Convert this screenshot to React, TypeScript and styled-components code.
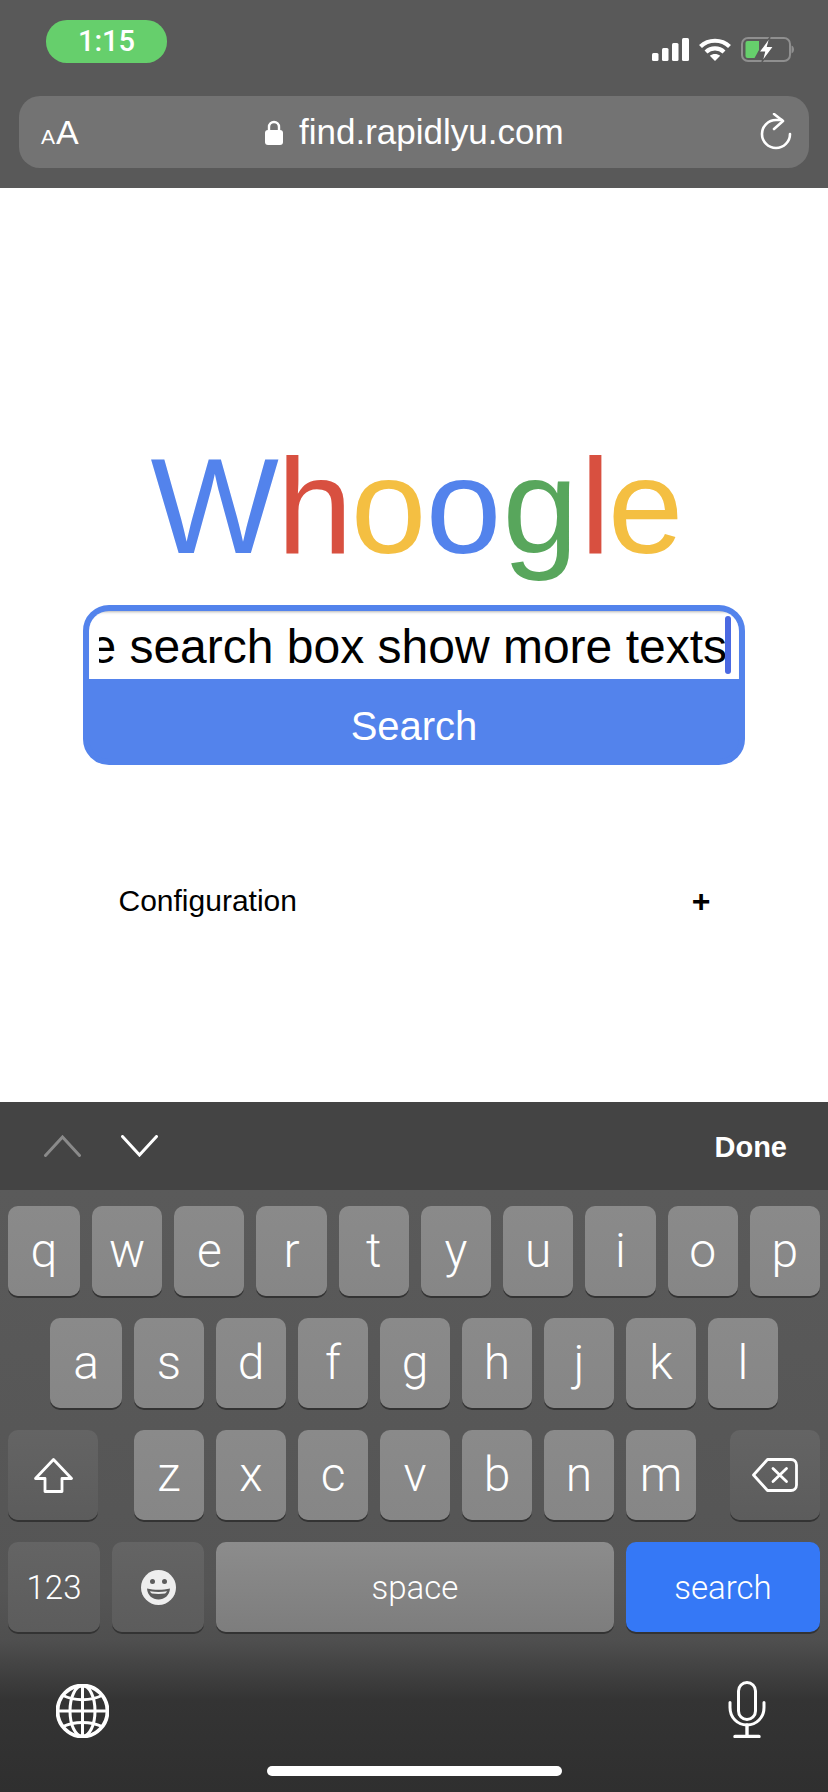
import React from "react"
import styled, { createGlobalStyle } from "styled-components"

const GlobalStyle = createGlobalStyle`
  html, body {
    margin: 0;
    padding: 0;
    background: #fff;
    font-family: "Liberation Sans", Arial, sans-serif;
  }
`

const Page = styled.div`
  width: 828px;
  height: 1792px;
  display: flex;
  flex-direction: column;
  overflow: hidden;
`

const Header = styled.header`
  height: 188px;
  background: #595959;
  padding: 20px 19px 0 19px;
  box-sizing: border-box;
`

const StatusBar = styled.div`
  height: 76px;
  display: flex;
  justify-content: space-between;
  align-items: flex-start;
  padding-left: 27px;
`

const TimePill = styled.div`
  width: 121px;
  height: 43px;
  border-radius: 21px;
  background: #66cf6c;
  color: #fff;
  font-family: Roboto, "Liberation Sans", sans-serif;
  font-size: 29px;
  font-weight: 500;
  line-height: 43px;
  text-align: center;
`

const StatusIcons = styled.div`
  display: flex;
  align-items: center;
  gap: 10px;
  margin-top: 17px;
  margin-right: 15px;
`

const UrlBar = styled.div`
  height: 72px;
  width: 790px;
  box-sizing: border-box;
  border-radius: 21px;
  background: #737373;
  position: relative;
  display: flex;
  align-items: center;
  justify-content: space-between;
  padding: 0 17px 0 22px;
  color: #fff;
`

const TextSize = styled.div`
  display: flex;
  align-items: baseline;
  gap: 1px;
  line-height: 1;
`

const SmallA = styled.span`
  font-size: 21px;
`

const BigA = styled.span`
  font-size: 34px;
`

const Address = styled.div`
  display: flex;
  align-items: center;
  gap: 16px;
  font-size: 35px;
  margin-right: 10px;
`

const Main = styled.main`
  flex: 1;
  background: #fff;
  padding-top: 250px;
  display: flex;
  flex-direction: column;
  align-items: center;
`

const Logo = styled.div`
  font-size: 136px;
  line-height: 136px;
  letter-spacing: -1.8px;
  height: 136px;
  margin-left: 4px;
`

const LogoLetter = styled.span<{ $color: string; $after?: number }>`
  color: ${p => p.$color};
  margin-right: ${p => p.$after ?? 0}px;
`

const SearchForm = styled.form`
  width: 662px;
  box-sizing: border-box;
  margin: 31px 0 0 0;
  border: 6px solid #5383ec;
  border-radius: 26px;
  background: #5383ec;
  overflow: hidden;
`

const Field = styled.div`
  position: relative;
  height: 68px;
  background: #fff;
  border-radius: 14px 14px 0 0;
  box-shadow: inset 0 3px 3px -2px rgba(0, 0, 0, 0.3);
  padding: 0 12px 0 10px;
`

const FieldText = styled.div`
  height: 100%;
  display: flex;
  justify-content: flex-end;
  overflow: hidden;
  white-space: nowrap;
  font-size: 48px;
  line-height: 71px;
  color: #000;
`

const Caret = styled.div`
  position: absolute;
  top: 5px;
  right: 8px;
  width: 6px;
  height: 58px;
  border-radius: 3px;
  background: #4a69e2;
`

const SearchButton = styled.div`
  height: 66px;
  padding-top: 14px;
  font-size: 40px;
  line-height: 66px;
  text-align: center;
  color: #fff;
`

const ConfigRow = styled.div`
  width: 592px;
  margin-top: 121px;
  margin-left: 1px;
  display: flex;
  justify-content: space-between;
  font-size: 30px;
  line-height: 30px;
  color: #000;
`

const Plus = styled.span`
  font-size: 32px;
  font-weight: 700;
`

const Toolbar = styled.div`
  height: 88px;
  background: #444;
  display: flex;
  align-items: center;
  padding: 0 41px 0 44px;
  color: #fff;
  box-sizing: border-box;
`

const Arrows = styled.div`
  display: flex;
  gap: 40px;
  flex: 1;
`

const Done = styled.div`
  font-size: 29px;
  font-weight: 700;
  margin-top: 3px;
`

const Keyboard = styled.div`
  height: 602px;
  box-sizing: border-box;
  padding: 16px 8px 0;
  display: flex;
  flex-direction: column;
  gap: 22px;
  background: linear-gradient(#5a5a5a 0, #555 400px, #4f4f4f 450px, #343434 510px, #2f2f2f 100%);
`

const KeyRow = styled.div<{ $inset?: number }>`
  display: flex;
  gap: 12px;
  padding: 0 ${p => p.$inset ?? 0}px;
  height: 90px;
`

const SpreadRow = styled(KeyRow)`
  justify-content: space-between;
`

const LetterGroup = styled.div`
  display: flex;
  gap: 12px;
  margin-left: 2px;
`

const Key = styled.div<{ $width?: number; $kind?: "letter" | "special" | "primary" }>`
  ${p => (p.$width ? `width: ${p.$width}px; flex: none;` : "flex: 1 1 0;")}
  height: 90px;
  box-sizing: border-box;
  border-radius: 10px;
  display: flex;
  align-items: center;
  justify-content: center;
  color: #fff;
  box-shadow: 0 2px 0 #333;
  background: ${p =>
    p.$kind === "special"
      ? "linear-gradient(#646464, #5c5c5c)"
      : p.$kind === "primary"
        ? "#3578f6"
        : "linear-gradient(#8a8a8a, #868686)"};
`

const Letter = styled.span`
  font-family: Roboto, "Liberation Sans", sans-serif;
  font-weight: 300;
  font-size: 48px;
  line-height: 90px;
`

const FixedLetterKey = styled(Key)`
  width: 70px;
  flex: none;
`

const KeyLabel = styled.span`
  font-family: Roboto, "Liberation Sans", sans-serif;
  font-size: 33px;
  font-weight: 300;
`

const SpaceKey = styled(Key)`
  background: linear-gradient(#8c8c8c, #7d7d7d);
`

const SystemRow = styled.div`
  margin-top: 27px;
  padding: 0 54px 0 48px;
  height: 57px;
  display: flex;
  justify-content: space-between;
  align-items: flex-end;
`

const HomeBar = styled.div`
  width: 295px;
  height: 10px;
  border-radius: 5px;
  background: #fff;
  margin: 6px auto 0;
`

const SignalIcon = () => (
  <svg width="37" height="23" viewBox="0 0 37 23" fill="#fff">
    <rect x="0" y="15" width="6.5" height="8" rx="1.5" />
    <rect x="10" y="10" width="6.5" height="13" rx="1.5" />
    <rect x="20" y="5" width="6.5" height="18" rx="1.5" />
    <rect x="30" y="0" width="7" height="23" rx="1.5" />
  </svg>
)

const WifiIcon = () => (
  <svg width="32" height="23" viewBox="0 0 32 23" fill="none" stroke="#fff" strokeWidth="4.2">
    <path d="M1.500 8.500C9.500.8 22.500.8 30.500 8.500" />
    <path d="M7 14c5-4.800 13-4.800 18 0" />
    <path d="M16 23l-5.200-5.200c3-2.400 7.400-2.400 10.400 0z" fill="#fff" stroke="none" />
  </svg>
)

const BatteryIcon = () => (
  <svg width="53" height="25" viewBox="0 0 53 25" fill="none">
    <rect x="1" y="1" width="48" height="23" rx="6" stroke="#8f8f8f" strokeWidth="2" />
    <path d="M50.500 8.500c1.600.6 2.500 2.200 2.500 4s-.9 3.400-2.500 4z" fill="#8f8f8f" />
    <path d="M4.500 6a2 2 0 0 1 2-2H18v9l-4.500 8h-7a2 2 0 0 1-2-2z" fill="#66cf6c" />
    <path d="M29 0L18 15h5.500L21 25l11.500-15.500h-6z" fill="#fff" stroke="#595959" strokeWidth="1.200" />
  </svg>
)

const LockIcon = () => (
  <svg width="18" height="25" viewBox="0 0 18 25">
    <path d="M4 11V7a5 5 0 0 1 10 0v4" fill="none" stroke="#fff" strokeWidth="2.400" />
    <rect x="0" y="10" width="18" height="15" rx="3" fill="#fff" />
  </svg>
)

const RefreshIcon = () => (
  <svg width="32" height="38" viewBox="0 0 32 38" fill="none" stroke="#fff" strokeWidth="2.600" strokeLinecap="round" strokeLinejoin="round">
    <path d="M30 21a14 14 0 1 1-14-14h6" />
    <path d="M14 1l9 7-9 8" />
  </svg>
)

const ChevronIcon = ({ up, color }: { up?: boolean; color: string }) => (
  <svg width="37" height="22" viewBox="0 0 37 22" fill="none" stroke={color} strokeWidth="3" strokeLinecap="round">
    <path d={up ? "M1.500 20.500L18.500 2l17 18.500" : "M1.500 1.500L18.500 20l17-18.500"} />
  </svg>
)

const ShiftIcon = () => (
  <svg width="39" height="35" viewBox="0 0 39 35" fill="none" stroke="#fff" strokeWidth="2.800" strokeLinejoin="round">
    <path d="M19.500 1.500L37.500 20.500H28V33.500H11V20.500H1.500z" />
  </svg>
)

const BackspaceIcon = () => (
  <svg width="46" height="34" viewBox="0 0 46 34" fill="none" stroke="#fff" strokeWidth="2.800" strokeLinecap="round" strokeLinejoin="round">
    <path d="M15.500 1.500H39a5.500 5.500 0 0 1 5.500 5.500v20a5.500 5.500 0 0 1-5.500 5.500H15.500L1.500 17z" />
    <path d="M21 10.500l13.500 13M34.500 10.500L21 23.500" />
  </svg>
)

const EmojiIcon = () => (
  <svg width="35" height="35" viewBox="0 0 35 35">
    <circle cx="17.500" cy="17.500" r="17.500" fill="#eee" />
    <circle cx="11.500" cy="11.500" r="2.500" fill="#5c5c5c" />
    <circle cx="23.500" cy="11.500" r="2.500" fill="#5c5c5c" />
    <path d="M6 18.500c7 1.800 16 1.800 23 0-.5 7-5.500 11-11.500 11S6.500 25.500 6 18.500z" fill="#5c5c5c" />
    <path d="M9 21.200c5.500.9 11.500.9 17 0-.8 1.400-1.400 2-2 2.400-4 .6-9 .6-13 0-.6-.4-1.400-1-2-2.400z" fill="#eee" />
  </svg>
)

const GlobeIcon = () => (
  <svg width="53" height="54" viewBox="0 0 53 54" fill="none" stroke="#fff" strokeWidth="3">
    <ellipse cx="26.500" cy="27" rx="25" ry="25.500" strokeWidth="3.800" />
    <ellipse cx="26.500" cy="27" rx="12.500" ry="25.500" />
    <path d="M26.500 1.500v51M1.500 27h50" />
    <path d="M7 11.500c11 5.500 28 5.500 39 0M7 42.500c11-5.500 28-5.500 39 0" />
  </svg>
)

const MicIcon = () => (
  <svg width="38" height="57" viewBox="0 0 38 57" fill="none" stroke="#fff" strokeWidth="3" strokeLinecap="round">
    <rect x="10.500" y="1.500" width="17" height="37" rx="8.500" />
    <path d="M2 21.500v5c0 10 7.500 17.500 17 17.500s17-7.500 17-17.500v-5" />
    <path d="M19 44v11M7 55.500h24" strokeWidth="3.400" />
  </svg>
)

const ROW_ONE = ["w", "e", "r", "t", "y", "u", "i", "o", "p"]
const ROW_TWO = ["s", "d", "f", "g", "h", "j", "k", "l"]
const ROW_THREE = ["z", "x", "c", "v", "b", "n", "m"]

const LOGO_LETTERS = [
  { char: "W", color: "#5383ec" },
  { char: "h", color: "#d85040" },
  { char: "o", color: "#f4bf42", after: 1 },
  { char: "o", color: "#5383ec", after: 3 },
  { char: "g", color: "#58a65c", after: 4 },
  { char: "l", color: "#d85040", after: -1 },
  { char: "e", color: "#f4bf42" },
]

const App = (): React.ReactElement => {
  return (
    <Page>
      <GlobalStyle />
      <Header>
        <StatusBar>
          <TimePill>1:15</TimePill>
          <StatusIcons>
            <SignalIcon />
            <WifiIcon />
            <BatteryIcon />
          </StatusIcons>
        </StatusBar>
        <UrlBar>
          <TextSize>
            <SmallA>A</SmallA>
            <BigA>A</BigA>
          </TextSize>
          <Address>
            <LockIcon />
            <span>find.rapidlyu.com</span>
          </Address>
          <RefreshIcon />
        </UrlBar>
      </Header>

      <Main>
        <Logo>
          {LOGO_LETTERS.map((l, i) => (
            <LogoLetter key={i} $color={l.color} $after={l.after}>
              {l.char}
            </LogoLetter>
          ))}
        </Logo>
        <SearchForm>
          <Field>
            <FieldText>e search box show more texts</FieldText>
            <Caret />
          </Field>
          <SearchButton>Search</SearchButton>
        </SearchForm>
        <ConfigRow>
          <span>Configuration</span>
          <Plus>+</Plus>
        </ConfigRow>
      </Main>

      <Toolbar>
        <Arrows>
          <ChevronIcon up color="#8a8a8a" />
          <ChevronIcon color="#fff" />
        </Arrows>
        <Done>Done</Done>
      </Toolbar>

      <Keyboard>
        <KeyRow>
          <Key $width={72}>
            <Letter>q</Letter>
          </Key>
          {ROW_ONE.map(k => (
            <Key key={k}>
              <Letter>{k}</Letter>
            </Key>
          ))}
        </KeyRow>
        <KeyRow $inset={42}>
          <Key $width={72}>
            <Letter>a</Letter>
          </Key>
          {ROW_TWO.map(k => (
            <Key key={k}>
              <Letter>{k}</Letter>
            </Key>
          ))}
        </KeyRow>
        <SpreadRow>
          <Key $width={90} $kind="special">
            <ShiftIcon />
          </Key>
          <LetterGroup>
            {ROW_THREE.map(k => (
              <FixedLetterKey key={k}>
                <Letter>{k}</Letter>
              </FixedLetterKey>
            ))}
          </LetterGroup>
          <Key $width={90} $kind="special">
            <BackspaceIcon />
          </Key>
        </SpreadRow>
        <KeyRow>
          <Key $width={92} $kind="special">
            <KeyLabel>123</KeyLabel>
          </Key>
          <Key $width={92} $kind="special">
            <EmojiIcon />
          </Key>
          <SpaceKey>
            <KeyLabel>space</KeyLabel>
          </SpaceKey>
          <Key $width={194} $kind="primary">
            <KeyLabel>search</KeyLabel>
          </Key>
        </KeyRow>
        <SystemRow>
          <GlobeIcon />
          <MicIcon />
        </SystemRow>
        <HomeBar />
      </Keyboard>
    </Page>
  )
}

export default App
